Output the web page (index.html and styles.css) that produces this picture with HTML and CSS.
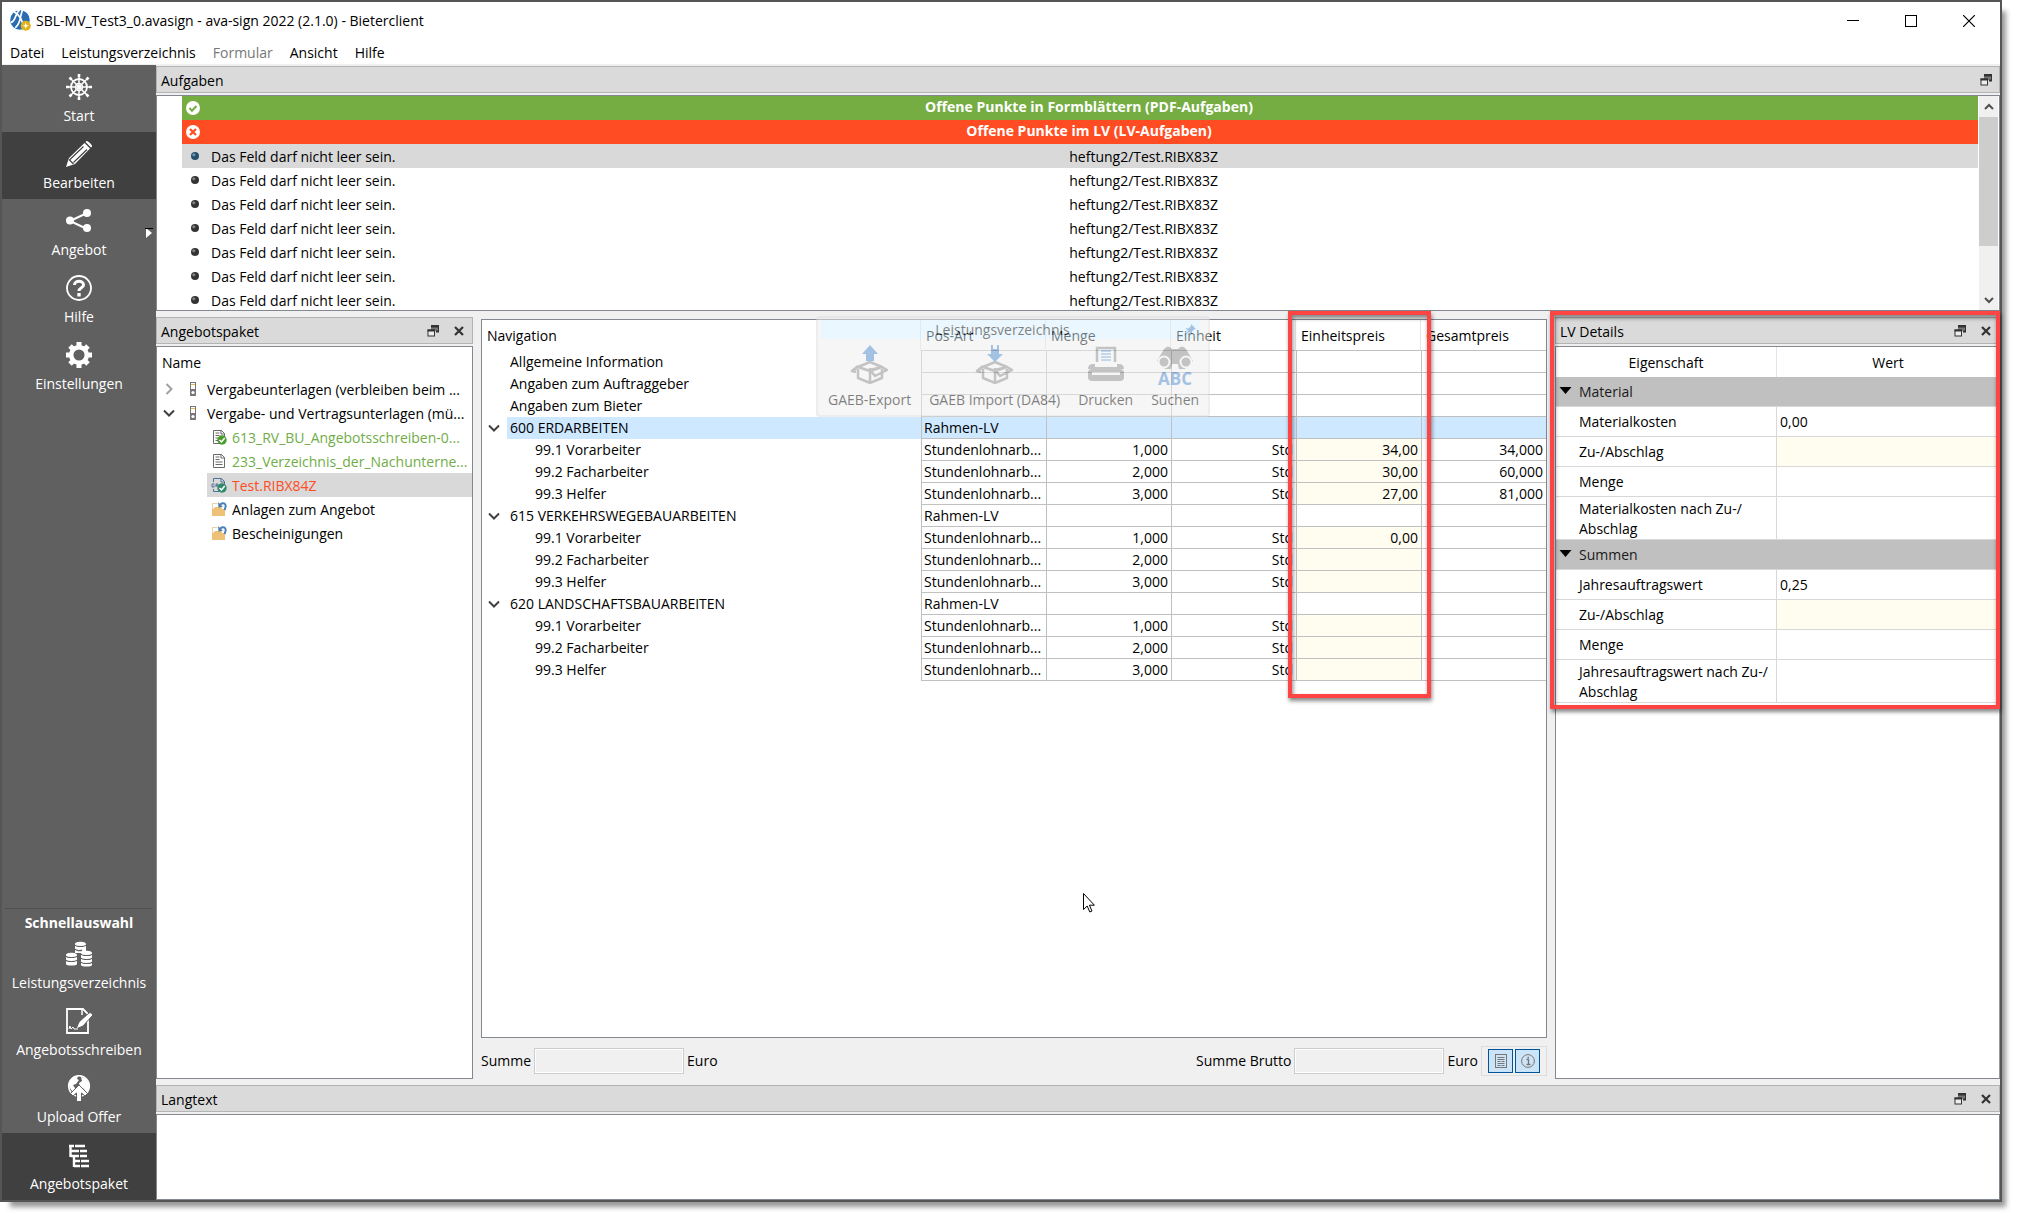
FILE: index.html
```html
<!DOCTYPE html>
<html lang="de">
<head>
<meta charset="utf-8">
<title>SBL-MV_Test3_0.avasign - ava-sign 2022 (2.1.0) - Bieterclient</title>
<link rel="stylesheet" href="styles.css">
</head>
<body>
<svg class="defs" width="0" height="0" aria-hidden="true">
  <defs>
    <symbol id="float" viewBox="0 0 12 12"><path d="M4 1h7v5H8V5H4z" fill="#777"/><path d="M4 0h8v6.500h-3M4 1.500h8" fill="none" stroke="#333" stroke-width="2"/><rect x="1" y="5" width="6.500" height="6" fill="#eee" stroke="#333"/><path d="M.5 5.500H8" stroke="#333" stroke-width="2"/></symbol>
    <symbol id="close" viewBox="0 0 12 12"><path d="M2 2l8 8M10 2l-8 8" stroke="#333" stroke-width="2.200"/></symbol>
    <symbol id="down" viewBox="0 0 12 12"><path d="M1 3.500l5 5 5-5" fill="none" stroke="#404040" stroke-width="2"/></symbol>
    <symbol id="right" viewBox="0 0 12 12"><path d="M3.500 1l5 5-5 5" fill="none" stroke="#a0a0a0" stroke-width="2"/></symbol>
    <symbol id="binder" viewBox="0 0 16 16"><rect x="5.500" y="1.500" width="5" height="13" fill="#fff" stroke="#777"/><path d="M6 3.500h4" stroke="#e8b850"/><rect x="5" y="8" width="6" height="7" fill="#777"/><circle cx="8" cy="11.500" r="1.600" fill="#fff"/></symbol>
    <symbol id="doc" viewBox="0 0 16 16"><path d="M2.500 1.500h8l3 3v10h-11z" fill="#fff" stroke="#6b6b6b"/><path d="M10 1.500v3.500h3.500M4.500 4h4M4.500 6.500h4M4.500 9h7M4.500 11.500h7" fill="none" stroke="#6b6b6b"/></symbol>
    <symbol id="ok" viewBox="0 0 10 10"><circle cx="5" cy="5" r="4.700" fill="currentColor"/><path d="M2.500 5l2 2 3.200-4" fill="none" stroke="#fff" stroke-width="1.500"/></symbol>
    <symbol id="folder" viewBox="0 0 16 16"><path d="M1.500 14V2.500h5" fill="none" stroke="#e6cfa0"/><path d="M1 15V9l3-3h6l1 2h3v7z" fill="#edc177"/><path d="M8.500 5.500c1-4 5-4 6-1.500.5 1.500 0 3-1 5" fill="none" stroke="#4c7fb5" stroke-width="2"/><path d="M7 1l.5 5.500L12 6z" fill="#4c7fb5"/></symbol>
    <symbol id="box" viewBox="0 0 40 28"><path d="M8 13v9l12 5 12-5v-9M20 12v15M8 11l12-5 12 5-12 4zM8 11l-6 4M8 10L2 15l4 1M32 11L20 14l5 6 12-6z" fill="none" stroke="#888" stroke-width="2.500" stroke-linejoin="round"/></symbol>
    <symbol id="bullet" viewBox="0 0 10 10"><circle cx="5" cy="5" r="4" fill="currentColor"/><circle cx="3.800" cy="3.800" r="1.500" fill="#fff" opacity=".4"/></symbol>
  </defs>
</svg>
<div class="window">
  <header class="titlebar">
    <svg class="app-icon" viewBox="0 0 20 20"><circle cx="9.500" cy="9.500" r="9.300" fill="#2a6cb0"/><path d="M9 0C4 5 6 10 1 12M12 0C9 6 11 12 5 17M4 2c4 2 8 6 9 16" stroke="#fff" stroke-width="1.600" fill="none"/><circle cx="15" cy="15" r="4.800" fill="#e0b21c"/><path d="M15 12l.8 2.200L18 15l-2.200.8L15 18l-.8-2.200L12 15l2.200-.8z" fill="#fff"/></svg>
    <h1>SBL-MV_Test3_0.avasign - ava-sign 2022 (2.1.0) - Bieterclient</h1>
    <div class="caption">
      <button aria-label="Minimieren"><svg viewBox="0 0 12 12"><path d="M0 5.500h12" stroke="#000"/></svg></button>
      <button aria-label="Maximieren"><svg viewBox="0 0 12 12"><rect x=".5" y=".5" width="11" height="11" fill="none" stroke="#000"/></svg></button>
      <button aria-label="Schließen"><svg viewBox="0 0 12 12"><path d="M0 0l12 12M12 0L0 12" stroke="#000" stroke-width="1.200"/></svg></button>
    </div>
  </header>
  <nav class="menubar">
    <button>Datei</button><button>Leistungsverzeichnis</button><button disabled>Formular</button><button>Ansicht</button><button>Hilfe</button>
  </nav>
  <div class="body">
    <aside class="sidebar">
      <button class="side"><svg viewBox="0 0 26 26" fill="none" stroke="#fff"><circle cx="13" cy="13" r="8" stroke-width="1.800"/><circle cx="13" cy="13" r="3.500" stroke-width="1.500"/><path d="M13 0v26M0 13h26M4 4l18 18M22 4L4 22" stroke-width="1.500"/><path d="M13 0v3M13 23v3M0 13h3M23 13h3M3.500 3.500l2 2M20.500 20.500l2 2M22.500 3.500l-2 2M5.500 20.500l-2 2" stroke-width="2.600"/></svg>Start</button>
      <button class="side active"><svg viewBox="0 0 26 26"><path d="M0 26l3-9L18.500 2l5.500 5.500L9 23z" fill="#fff"/><path d="M19.500 1l1-1c1-.5 6 4 5.500 5.500l-1 1z" fill="#fff"/><path d="M4 18.500L17.500 5.500M7.500 21.500L21 8.500M3 18.500l4.500 4.500" stroke="#404040" stroke-width="1.100" fill="none"/></svg>Bearbeiten</button>
      <button class="side"><svg viewBox="0 0 26 26"><path d="M21 5L4 13l17 8" fill="none" stroke="#fff" stroke-width="2"/><circle cx="4" cy="12.500" r="4" fill="#fff"/><circle cx="21" cy="5" r="4" fill="#fff"/><circle cx="21" cy="20" r="4" fill="#fff"/></svg>Angebot<svg class="more" viewBox="0 0 8 10"><path d="M1 0l6 5-6 5z" fill="#fff"/><path d="M0 .5h8" stroke="#000"/></svg></button>
      <button class="side"><svg viewBox="0 0 26 26" fill="none" stroke="#fff"><circle cx="13" cy="13" r="12" stroke-width="1.800"/><path d="M8.500 10c0-5 9-5 9 0 0 3-4.500 2.500-4.500 6" stroke-width="3"/><path d="M13 18v3.500" stroke-width="3.400"/></svg>Hilfe</button>
      <button class="side"><svg viewBox="0 0 26 26" fill="none" stroke="#fff"><circle cx="13" cy="13" r="7.800" stroke-width="4.500"/><path d="M13 0v4M13 22v4M0 13h4M22 13h4M4 4l3 3M19 19l3 3M22 4l-3 3M7 19l-3 3" stroke-width="5"/></svg>Einstellungen</button>
      <section class="quick">
        <h2>Schnellauswahl</h2>
        <button class="side"><svg viewBox="0 0 26 26"><g fill="#fff"><path d="M9 3c0-3 11-3 11 0v9H9zM0 14c0-3 11-3 11 0v9c0 2-11 2-11 0zM15 12c0-3 11-3 11 0v12c0 2-11 2-11 0z"/></g><path d="M9 4c1 2 10 2 11 0M9 8c1 2 6 2 7 1M0 15c1 2 10 2 11 0M0 19c1 2 10 2 11 0M15 13c1 2 10 2 11 0M15 17c1 2 10 2 11 0M15 21c1 2 10 2 11 0" fill="none" stroke="#606060" stroke-width="1.200"/></svg>Leistungsverzeichnis</button>
        <button class="side"><svg viewBox="0 0 26 26"><path d="M1 1h16l5 5v19H1z" fill="none" stroke="#fff" stroke-width="1.800"/><path d="M16 1v6" stroke="#fff" stroke-width="1.500"/><path d="M10 21l3-7L23 5c2-1 4 1 3.500 2.500L17 18z" fill="#fff" stroke="#606060"/><path d="M3 21l1-3 1 3 2-2 1 2h4" fill="none" stroke="#fff"/></svg>Angebotsschreiben</button>
        <button class="side"><svg viewBox="0 0 26 26"><circle cx="13" cy="11" r="10.300" fill="none" stroke="#fff" stroke-width="1.600"/><path d="M4 5c3-4 5-4 8-4l-1 3 2 1-3 4-3 1 2 3-1 4c-3-1-5-5-5-8zM15 2c4 0 8 4 8 9 0 3-1 5-3 7l-2-4-4-2-1-4 3-2z" fill="#fff"/><path d="M13 10l8.500 8.500-2.500 2.500-3.500-3V27h-5v-9L7 21l-2.500-2.500z" fill="#fff" stroke="#606060"/></svg>Upload Offer</button>
        <button class="side active"><svg viewBox="0 0 26 26"><path d="M4.500 3v12M3 4h16M5 9h16M5 14h16M8 14v11M8 19h15M8 24h15" fill="none" stroke="#fff" stroke-width="2.400"/><path d="M8.500 2v5M13.500 7v10M14.500 17v9" stroke="#404040"/></svg>Angebotspaket</button>
      </section>
    </aside>
    <main class="docks">
      <section class="dock tasks">
        <header class="dock-title"><h2>Aufgaben</h2><button aria-label="Abdocken"><svg><use href="#float"/></svg></button></header>
        <div class="pane task-pane">
          <div class="task-list">
            <div class="band green"><svg viewBox="0 0 14 14"><circle cx="7" cy="7" r="7" fill="#fff"/><path d="M3.500 7l2.500 2.800L10.500 5" fill="none" stroke="#76ad43" stroke-width="2"/></svg><strong>Offene Punkte in Formblättern (PDF-Aufgaben)</strong></div>
            <div class="band red"><svg viewBox="0 0 14 14"><circle cx="7" cy="7" r="7" fill="#fff"/><path d="M4 4l6 6M10 4l-6 6" stroke="#ff4c22" stroke-width="2.200"/></svg><strong>Offene Punkte im LV (LV-Aufgaben)</strong></div>
            <div class="task selected"><svg><use href="#bullet"/></svg><span>Das Feld darf nicht leer sein.</span><span>heftung2/Test.RIBX83Z</span></div>
            <div class="task"><svg><use href="#bullet"/></svg><span>Das Feld darf nicht leer sein.</span><span>heftung2/Test.RIBX83Z</span></div>
            <div class="task"><svg><use href="#bullet"/></svg><span>Das Feld darf nicht leer sein.</span><span>heftung2/Test.RIBX83Z</span></div>
            <div class="task"><svg><use href="#bullet"/></svg><span>Das Feld darf nicht leer sein.</span><span>heftung2/Test.RIBX83Z</span></div>
            <div class="task"><svg><use href="#bullet"/></svg><span>Das Feld darf nicht leer sein.</span><span>heftung2/Test.RIBX83Z</span></div>
            <div class="task"><svg><use href="#bullet"/></svg><span>Das Feld darf nicht leer sein.</span><span>heftung2/Test.RIBX83Z</span></div>
            <div class="task"><svg><use href="#bullet"/></svg><span>Das Feld darf nicht leer sein.</span><span>heftung2/Test.RIBX83Z</span></div>
          </div>
          <div class="scroll"><svg viewBox="0 0 12 12"><path d="M2 8l4-4 4 4" fill="none" stroke="#505050" stroke-width="2"/></svg><i></i><svg viewBox="0 0 12 12"><path d="M2 4l4 4 4-4" fill="none" stroke="#505050" stroke-width="2"/></svg></div>
        </div>
      </section>
      <div class="middle">
        <section class="dock package">
          <header class="dock-title"><h2>Angebotspaket</h2><button aria-label="Abdocken"><svg><use href="#float"/></svg></button><button aria-label="Schließen"><svg><use href="#close"/></svg></button></header>
          <div class="pane">
            <div class="tree-head">Name</div>
            <ul class="tree">
              <li><svg class="chev"><use href="#right"/></svg><svg class="ico"><use href="#binder"/></svg><span>Vergabeunterlagen (verbleiben beim ...</span></li>
              <li><svg class="chev"><use href="#down"/></svg><svg class="ico"><use href="#binder"/></svg><span>Vergabe- und Vertragsunterlagen (mü...</span></li>
              <li class="leaf done"><svg class="ico" viewBox="0 0 16 16"><use href="#doc"/><use href="#ok" x="6" y="6" width="10" height="10" color="#4a9a2c"/></svg><span>613_RV_BU_Angebotsschreiben-0...</span></li>
              <li class="leaf done"><svg class="ico"><use href="#doc"/></svg><span>233_Verzeichnis_der_Nachunterne...</span></li>
              <li class="leaf open"><svg class="ico" viewBox="0 0 16 16"><path d="M2.500 5V1.500h8l3 3v10h-11V12M10 1.500v3.500h3.500" fill="none" stroke="#4f7396"/><path d="M3.500 7H1v3h2V8.500M5 10V7h2v3M5 8.500h2" fill="none" stroke="#4f7396"/><use href="#ok" x="6" y="6" width="10" height="10" color="#2f8a6c"/></svg><span>Test.RIBX84Z</span></li>
              <li class="leaf"><svg class="ico"><use href="#folder"/></svg><span>Anlagen zum Angebot</span></li>
              <li class="leaf"><svg class="ico"><use href="#folder"/></svg><span>Bescheinigungen</span></li>
            </ul>
          </div>
        </section>
        <section class="center">
          <div class="pane">
            <table class="lv">
              <colgroup><col><col class="c"><col class="c"><col class="c"><col class="c"><col class="c"></colgroup>
              <thead><tr><th>Navigation</th><th>Pos-Art</th><th>Menge</th><th>Einheit</th><th>Einheitspreis</th><th>Gesamtpreis</th></tr></thead>
              <tbody>
                <tr><td class="l1">Allgemeine Information</td><td></td><td></td><td></td><td></td><td></td></tr>
                <tr><td class="l1">Angaben zum Auftraggeber</td><td></td><td></td><td></td><td></td><td></td></tr>
                <tr><td class="l1">Angaben zum Bieter</td><td></td><td></td><td></td><td></td><td></td></tr>
                <tr class="sel"><td class="g"><svg><use href="#down"/></svg>600 ERDARBEITEN</td><td>Rahmen-LV</td><td></td><td></td><td></td><td></td></tr>
                <tr class="p"><td>99.1 Vorarbeiter</td><td>Stundenlohnarb...</td><td>1,000</td><td>Std</td><td>34,00</td><td>34,000</td></tr>
                <tr class="p"><td>99.2 Facharbeiter</td><td>Stundenlohnarb...</td><td>2,000</td><td>Std</td><td>30,00</td><td>60,000</td></tr>
                <tr class="p"><td>99.3 Helfer</td><td>Stundenlohnarb...</td><td>3,000</td><td>Std</td><td>27,00</td><td>81,000</td></tr>
                <tr><td class="g"><svg><use href="#down"/></svg>615 VERKEHRSWEGEBAUARBEITEN</td><td>Rahmen-LV</td><td></td><td></td><td></td><td></td></tr>
                <tr class="p"><td>99.1 Vorarbeiter</td><td>Stundenlohnarb...</td><td>1,000</td><td>Std</td><td>0,00</td><td></td></tr>
                <tr class="p"><td>99.2 Facharbeiter</td><td>Stundenlohnarb...</td><td>2,000</td><td>Std</td><td></td><td></td></tr>
                <tr class="p"><td>99.3 Helfer</td><td>Stundenlohnarb...</td><td>3,000</td><td>Std</td><td></td><td></td></tr>
                <tr><td class="g"><svg><use href="#down"/></svg>620 LANDSCHAFTSBAUARBEITEN</td><td>Rahmen-LV</td><td></td><td></td><td></td><td></td></tr>
                <tr class="p"><td>99.1 Vorarbeiter</td><td>Stundenlohnarb...</td><td>1,000</td><td>Std</td><td></td><td></td></tr>
                <tr class="p"><td>99.2 Facharbeiter</td><td>Stundenlohnarb...</td><td>2,000</td><td>Std</td><td></td><td></td></tr>
                <tr class="p"><td>99.3 Helfer</td><td>Stundenlohnarb...</td><td>3,000</td><td>Std</td><td></td><td></td></tr>
              </tbody>
            </table>
          </div>
          <div class="sums">
            <label for="netto">Summe</label><input id="netto" readonly><span>Euro</span>
            <label class="brutto" for="brutto">Summe Brutto</label><input id="brutto" readonly><span>Euro</span>
            <div class="toggles">
              <button aria-label="Langtext"><svg viewBox="0 0 14 14"><rect x="1.500" y=".5" width="11" height="13" fill="none" stroke="#777"/><path d="M3.500 3.500h7M3.500 5.500h7M3.500 7.500h3M7.500 7.500h3M3.500 9.500h7M3.500 11.500h3M7.500 11.500h3" stroke="#777"/></svg></button>
              <button aria-label="Details"><svg viewBox="0 0 14 14"><circle cx="7" cy="7" r="6.400" fill="none" stroke="#777"/><path d="M5.500 5.500H7.500v5M5.500 10.500h4M6.500 3.500h1.500" fill="none" stroke="#777" stroke-width="1.300"/></svg></button>
            </div>
          </div>
          <div class="mark price-mark"></div>
          <div class="palette">
            <div class="palette-title"><span>Leistungsverzeichnis</span><svg viewBox="0 0 12 12"><path d="M7 0l5 5-2 .5-2 2v3L5 8l-5 4 4-5-2.500-3 3 .5L7 2z" fill="#4a86c8"/></svg></div>
            <div class="palette-body">
              <button><svg viewBox="0 0 40 40"><use href="#box" y="11" width="40" height="28"/><path d="M20 0l8 9h-4v7h-8V9h-4z" fill="#4a86c8"/></svg>GAEB-Export</button>
              <button><svg viewBox="0 0 40 40"><use href="#box" y="11" width="40" height="28"/><path d="M20 17l8-8h-4V0h-2v4h-4V0h-2v9h-4z" fill="#4a86c8"/></svg>GAEB Import (DA84)</button>
              <button><svg viewBox="0 0 40 40"><path d="M11 17V3h18v14" fill="#eee" stroke="#888" stroke-width="2.500"/><path d="M15 6h10M15 9h10M15 12h10M15 15h10" stroke="#6aa0d8" stroke-width="1.500"/><path d="M2 24q0-5 5-5h2v3h22v-3h2q5 0 5 5z" fill="#888"/><rect x="2" y="24" width="36" height="12" rx="4" fill="#888"/><path d="M6 27h28v3H6z" fill="#eee"/></svg>Drucken</button>
              <button><svg viewBox="0 0 40 40"><path d="M2 16L9 4q4-5 8 0h6q4-5 8 0l7 12-8 8h-6l-1-5h-6l-1 5h-6z" fill="#888"/><circle cx="9" cy="17" r="5.500" fill="#888" stroke="#eee" stroke-width="2"/><circle cx="31" cy="17" r="5.500" fill="#888" stroke="#eee" stroke-width="2"/><text x="20" y="40" text-anchor="middle" class="abc">ABC</text></svg>Suchen</button>
            </div>
          </div>
          <svg class="pointer" viewBox="0 0 12 20"><path d="M.5.5v16l3.700-3.500 2.600 6 2.200-1-2.600-5.800h5z" fill="#fff" stroke="#000"/></svg>
        </section>
        <section class="dock details">
          <header class="dock-title"><h2>LV Details</h2><button aria-label="Abdocken"><svg><use href="#float"/></svg></button><button aria-label="Schließen"><svg><use href="#close"/></svg></button></header>
          <div class="pane">
            <table class="props">
              <thead><tr><th class="prop">Eigenschaft</th><th>Wert</th></tr></thead>
              <tbody>
                <tr class="group"><th colspan="2"><svg viewBox="0 0 12 7"><path d="M0 0h12L6 7z"/></svg>Material</th></tr>
                <tr><td>Materialkosten</td><td>0,00</td></tr>
                <tr><td>Zu-/Abschlag</td><td class="edit"></td></tr>
                <tr><td>Menge</td><td></td></tr>
                <tr class="tall"><td>Materialkosten nach Zu-/<br>Abschlag</td><td></td></tr>
                <tr class="group"><th colspan="2"><svg viewBox="0 0 12 7"><path d="M0 0h12L6 7z"/></svg>Summen</th></tr>
                <tr><td>Jahresauftragswert</td><td>0,25</td></tr>
                <tr><td>Zu-/Abschlag</td><td class="edit"></td></tr>
                <tr><td>Menge</td><td></td></tr>
                <tr class="tall"><td>Jahresauftragswert nach Zu-/<br>Abschlag</td><td></td></tr>
              </tbody>
            </table>
          </div>
          <div class="mark detail-mark"></div>
        </section>
      </div>
      <section class="dock longtext">
        <header class="dock-title"><h2>Langtext</h2><button aria-label="Abdocken"><svg><use href="#float"/></svg></button><button aria-label="Schließen"><svg><use href="#close"/></svg></button></header>
        <div class="pane"></div>
      </section>
    </main>
  </div>
</div>
</body>
</html>
```

FILE: styles.css
```css
* { box-sizing: border-box; }
html, body { height: 100%; }
body {
  margin: 0;
  padding: 0 15px 15px 0;
  background: #fff;
  color: #000;
  font: 14px/20px "Open Sans", "Noto Sans", sans-serif;
}
h1, h2 { margin: 0; font-size: 14px; font-weight: 400; }
button { font: inherit; color: inherit; background: none; border: 0; padding: 0; }
svg { display: block; flex: none; }
.defs { position: absolute; }

.window {
  height: 100%;
  display: flex;
  flex-direction: column;
  border: 2px solid #555;
  background: #f0f0f0;
  box-shadow: 7px 8px 5px -3px #999;
}
.titlebar { display: flex; align-items: center; height: 37px; padding-left: 8px; background: #fff; }
.app-icon { width: 21px; height: 21px; margin-right: 5px; }
.titlebar h1 { flex: 1; }
.caption { display: flex; padding-right: 2px; }
.caption button { width: 58px; height: 36px; display: grid; place-items: center; }
.caption svg { width: 12px; height: 12px; }
.menubar { display: flex; gap: 17px; height: 25px; padding: 2px 0 0 8px; background: #fff; }
.menubar button { height: 24px; }
.menubar button:disabled { color: #777; }

.body { flex: 1; display: flex; min-height: 0; padding-top: 1px; }
.sidebar { width: 154px; flex: none; display: flex; flex-direction: column; background: #606060; color: #fff; }
.side {
  position: relative;
  width: 100%;
  height: 67px;
  padding-top: 9px;
  display: flex;
  flex-direction: column;
  align-items: center;
  gap: 5px;
  line-height: 22px;
}
.side svg { width: 26px; height: 26px; }
.side .more { position: absolute; right: 3px; top: 29px; width: 8px; height: 10px; }
.side.active { background: #404040; }
.quick { margin-top: auto; }
.quick h2 { margin: 0 3px; height: 24px; border-top: 1px solid #505050; font-weight: 700; line-height: 28px; text-align: center; }

.docks { flex: 1; min-width: 0; display: flex; flex-direction: column; gap: 6px; padding-top: 1px; }
.dock { display: flex; flex-direction: column; gap: 2px; }
.dock-title {
  display: flex;
  align-items: center;
  gap: 14px;
  height: 27px;
  flex: none;
  padding: 0 7px 0 4px;
  background: #dadada;
  border: 1px solid #b4b4b4;
}
.dock-title h2 { flex: 1; padding-top: 2px; }
.dock-title svg { width: 12px; height: 12px; }
.pane { flex: 1; min-height: 0; overflow: hidden; background: #fff; border: 1px solid #828790; }

.tasks { height: 245px; flex: none; }
.task-pane { display: flex; padding-right: 1px; }
.task-list { flex: 1; padding: 0 1px 0 25px; }
.band, .task { height: 24px; display: flex; align-items: center; }
.band { padding-left: 4px; color: #fff; }
.band svg { width: 14px; height: 14px; }
.band strong { flex: 1; padding-bottom: 2px; text-align: center; }
.green { background: #76ad43; }
.red { background: #ff4c22; }
.task { padding-left: 8px; }
.task svg { width: 10px; height: 10px; color: #333; margin-right: 11px; }
.task.selected svg { color: #24506f; }
.task span { width: 48%; padding-top: 1px; }
.selected { background: #d9d9d9; }
.scroll { width: 19px; display: flex; flex-direction: column; align-items: center; background: #f0f0f0; }
.scroll svg { width: 12px; height: 12px; margin: 5px 0 4px; }
.scroll i { width: 19px; height: 129px; background: #cdcdcd; margin-bottom: auto; }

.middle { flex: 1; min-height: 0; display: flex; gap: 8px; }
.package { width: 317px; flex: none; }
.tree-head { height: 30px; padding: 6px 5px; }
.tree { list-style: none; margin: 0; padding: 0; }
.tree li { display: flex; align-items: center; height: 24px; padding-left: 6px; }
.tree .chev { width: 12px; height: 12px; margin-right: 10px; }
.tree .ico { width: 16px; height: 16px; margin-right: 6px; }
.tree span { flex: 1; min-width: 0; padding-top: 1px; overflow: hidden; text-overflow: ellipsis; white-space: nowrap; }
.tree .leaf { margin-left: 50px; padding-left: 4px; }
.tree .leaf .ico { margin-right: 5px; }
.done { color: #70ad47; }
.open { color: #ff4c22; background: #d9d9d9; }

.center { position: relative; flex: 1; min-width: 0; display: flex; flex-direction: column; padding-top: 2px; }
.lv { width: 100%; table-layout: fixed; border-collapse: separate; border-spacing: 0; }
.lv .c { width: 125px; }
.lv th { height: 31px; padding: 1px 5px 0; text-align: left; font-weight: 400; border-bottom: 1px solid #c0c0c0; border-right: 1px solid #e5e5e5; }
.lv th:first-child { border-bottom-color: #fff; }
.lv th:last-child { border-right: 0; }
.lv td {
  height: 22px;
  padding: 0 3px 0 2px;
  line-height: 20px;
  border-left: 1px solid #c0c0c0;
  border-bottom: 1px solid #c0c0c0;
  overflow: hidden;
  text-overflow: ellipsis;
  white-space: nowrap;
}
.lv td:first-child { border-left: 0; border-bottom-color: transparent; }
.lv .l1 { padding-left: 28px; }
.lv .g { padding: 0 0 0 6px; }
.lv .g svg { float: left; width: 12px; height: 12px; margin: 4px 10px 0 0; }
.lv .p td:first-child { padding-left: 53px; }
.p td:nth-child(n+3) { text-align: right; }
.p td:nth-child(5) { background: #fffdf0; }
.sel td { background: #cde8ff; }
.lv .sel .g { background: linear-gradient(to right, #fff 25px, #cde8ff 25px); }

.sums { display: flex; align-items: center; height: 41px; flex: none; padding-top: 4px; gap: 3px; }
.sums input { width: 150px; height: 26px; background: #f0f0f0; border: 1px solid #ccc; box-shadow: inset 0 0 0 1px #fff; }
.sums .brutto { margin-left: auto; }
.toggles { display: flex; gap: 2px; padding: 2px 6px; border: 1px solid #ddd; }
.toggles button { width: 25px; height: 24px; display: grid; place-items: center; background: #cce4f7; border: 1px solid #005499; }
.toggles svg { width: 14px; height: 14px; }

.details { position: relative; width: 445px; flex: none; }
.details .pane { border-right-color: #999; }
.props { width: 100%; table-layout: fixed; border-collapse: separate; border-spacing: 0; }
.props th { height: 30px; padding: 1px 0 0; font-weight: 400; }
.props .prop { width: 221px; border-right: 1px solid #e5e5e5; }
.props .group th { padding: 0; text-align: left; background: #c0c0c0; border-bottom: 1px solid #d8d8d8; color: #1a1a1a; }
.group svg { display: inline-block; width: 13px; height: 7px; margin: 0 7px 3px 3px; }
.props td { height: 30px; padding: 0 3px; border-bottom: 1px solid #d8d8d8; }
.props td:first-child { padding-left: 23px; border-right: 1px solid #d8d8d8; }
.props .tall td { height: 43px; padding-top: 1px; white-space: nowrap; }
.edit { background: #fffdf0; }

.mark { position: absolute; border: 4px solid #ff4444; box-shadow: 1px 3px 4px #0007, inset 1px 3px 4px #0007; pointer-events: none; }
.price-mark { right: 116px; top: -6px; width: 143px; height: 387px; }
.detail-mark { left: -5px; right: 0; top: -6px; height: 398px; }

.palette {
  position: absolute;
  left: 335px;
  top: -1px;
  width: 394px;
  height: 101px;
  padding: 2px 8px 0 3px;
  background: #eee;
  border: 2px solid #ddd;
  border-radius: 4px;
  opacity: .5;
}
.palette-title { display: flex; height: 19px; background: #d8f0fe; line-height: 19px; }
.palette-title span { flex: 1; text-align: center; }
.palette-title svg { width: 12px; height: 12px; margin: 4px 4px 0 0; }
.palette-body { display: flex; gap: 18px; padding: 6px 0 0 7px; }
.palette-body button { display: flex; flex-direction: column; align-items: center; gap: 5px; white-space: nowrap; }
.palette-body svg { width: 40px; height: 40px; }
.abc { font: 700 17px "Open Sans", sans-serif; fill: #4a86c8; }
.pointer { position: absolute; left: 602px; top: 576px; width: 12px; height: 20px; }

.longtext { height: 115px; flex: none; }
```
